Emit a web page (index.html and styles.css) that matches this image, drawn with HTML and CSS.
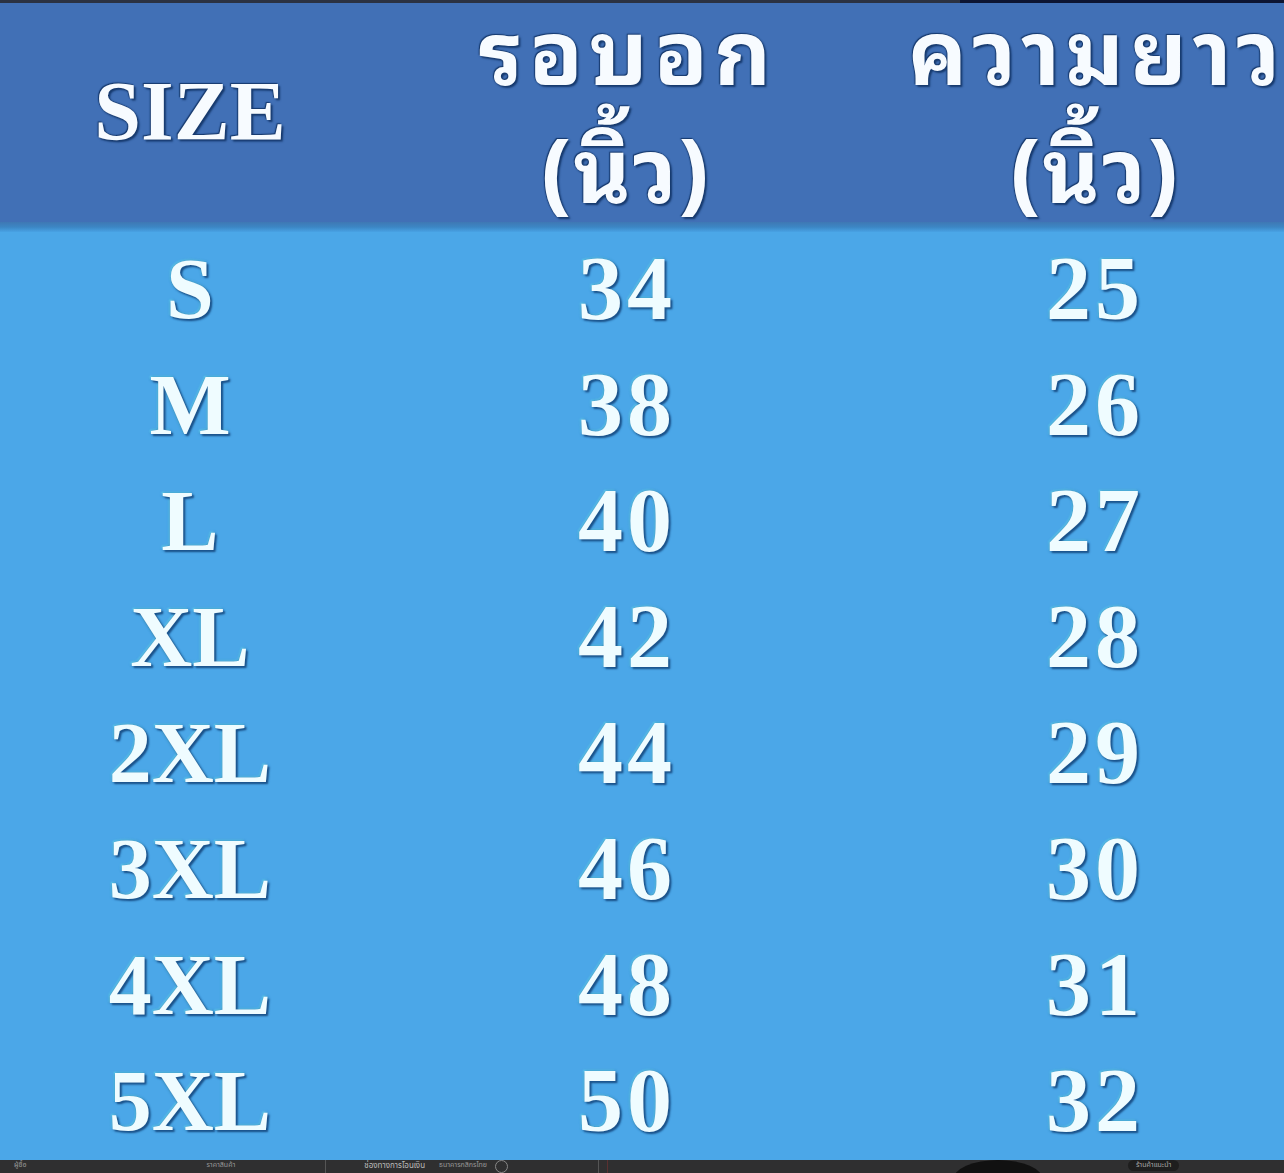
FILE: index.html
```html
<!DOCTYPE html>
<html lang="th">
<head>
<meta charset="utf-8">
<title>Size chart</title>
<link rel="stylesheet" href="styles.css">
</head>
<body>
<div class="page">
  <div class="topbar"><span class="tb-left"></span><span class="tb-right"></span></div>
  <div class="header">
    <div class="hcell hsize">SIZE</div>
    <div class="hcell hthai"><span class="l1">รอบอก</span><span class="l2">(นิ้ว)</span></div>
    <div class="hcell hthai c3"><span class="l1">ความยาว</span><span class="l2">(นิ้ว)</span></div>
  </div>
  <div class="band"></div>
  <div class="rows">
    <div class="row"><span>S</span><span class="num">34</span><span class="num c3">25</span></div>
    <div class="row"><span>M</span><span class="num">38</span><span class="num c3">26</span></div>
    <div class="row"><span>L</span><span class="num">40</span><span class="num c3">27</span></div>
    <div class="row"><span>XL</span><span class="num">42</span><span class="num c3">28</span></div>
    <div class="row"><span>2XL</span><span class="num">44</span><span class="num c3">29</span></div>
    <div class="row"><span>3XL</span><span class="num">46</span><span class="num c3">30</span></div>
    <div class="row"><span>4XL</span><span class="num">48</span><span class="num c3">31</span></div>
    <div class="row"><span>5XL</span><span class="num">50</span><span class="num c3">32</span></div>
  </div>
  <div class="bottombar">
    <span class="bb-text small">ผู้ซื้อ</span>
    <span class="bb-text small mid">ราคาสินค้า</span>
    <span class="bb-sep"></span>
    <span class="bb-text big">ช่องทางการโอนเงิน</span>
    <span class="bb-text small">ธนาคารกสิกรไทย</span>
    <span class="bb-circle"></span>
    <span class="bb-sep"></span>
    <span class="bb-box"></span>
    <span class="bb-dark"></span>
    <span class="bb-pill">ร้านค้าแนะนำ</span>
  </div>
</div>
</body>
</html>
```
FILE: styles.css
```css
html, body {
  margin: 0;
  padding: 0;
  background: #4ba7e8;
}
.page {
  width: 1284px;
  height: 1173px;
  overflow: hidden;
  display: flex;
  flex-direction: column;
  background: #4ba7e8;
}
.topbar {
  height: 3px;
  display: flex;
  flex: none;
}
.tb-left { width: 960px; background: #2b3242; }
.tb-right { flex: 1; background: #0d1532; }

.header {
  height: 219px;
  flex: none;
  background: #4170b6;
  display: grid;
  grid-template-columns: 380px 490px 1fr;
  align-items: center;
  color: #f7fbff;
}
.hcell {
  display: flex;
  flex-direction: column;
  align-items: center;
  white-space: nowrap;
}
.hsize {
  font-family: "Liberation Serif", "Times New Roman", serif;
  font-weight: bold;
  font-size: 84px;
  line-height: 1;
  padding-bottom: 2px;
  text-shadow: 0 0 2px #173a6e, 2px 2px 2px #173a6e, -1px -1px 1px #173a6e;
}
.hthai {
  align-self: start;
  font-family: "Noto Sans Thai Looped", "Noto Sans Thai", "Noto Sans", sans-serif;
  font-weight: bold;
  font-size: 88px;
  letter-spacing: 6px;
  text-shadow: 0 0 2px #173a6e, 2px 2px 2px #173a6e, -1px -1px 1px #173a6e;
}
.hthai .l1 { line-height: 80px; margin-top: 3px; padding-left: 6px; }
.hthai .l2 { line-height: 100px; margin-top: 28px; letter-spacing: 2px; padding-left: 2px; }
.hthai.c3 { padding-left: 32px; }

.band {
  height: 10px;
  flex: none;
  background: linear-gradient(#3f78b4, #3c86c4 50%, #48a2e4);
}

.rows {
  display: flex;
  flex-direction: column;
  flex: none;
}
.row {
  height: 116px;
  display: grid;
  grid-template-columns: 380px 490px 1fr;
  align-items: center;
  justify-items: center;
  font-family: "Liberation Serif", "Times New Roman", serif;
  font-weight: bold;
  font-size: 86px;
  line-height: 1;
  color: #effcff;
  text-shadow: 0 0 3px #1d5d98, 2px 2px 2px #1a4f86, -1px -1px 2px #6fe6ff;
}
.row span { padding-bottom: 2px; }
.row .num { font-size: 90px; letter-spacing: 4px; padding-left: 4px; }
.row .num.c3 { padding-left: 36px; }

.bottombar {
  flex: 1;
  background: #2f2f30;
  display: flex;
  align-items: flex-start;
  overflow: hidden;
  font-family: "Noto Sans Thai", "Noto Sans", sans-serif;
  color: #9a9a9a;
}
.bb-text { white-space: nowrap; line-height: 1; }
.bb-text.small { font-size: 7px; margin-left: 14px; margin-top: 2px; }
.bb-text.small.mid { margin-left: 180px; }
.bb-text.big { font-size: 8px; line-height: 12px; color: #bdbdbd; margin-left: 38px; margin-top: 0; }
.bb-sep { width: 1px; height: 13px; background: #555; margin-left: 90px; }
.bb-circle { width: 11px; height: 11px; border: 1px solid #888; border-radius: 50%; margin-left: 8px; margin-top: 0; }
.bb-box { width: 150px; height: 13px; border-left: 1px solid #5a3030; margin-left: 8px; }
.bb-dark { width: 90px; height: 40px; border-radius: 50%; background: #111; margin-left: 195px; }
.bb-pill { font-size: 7px; line-height: 11px; color: #aaa; background: #1e1e1e; border-radius: 6px; padding: 0 8px; margin-left: 85px; white-space: nowrap; }
```
